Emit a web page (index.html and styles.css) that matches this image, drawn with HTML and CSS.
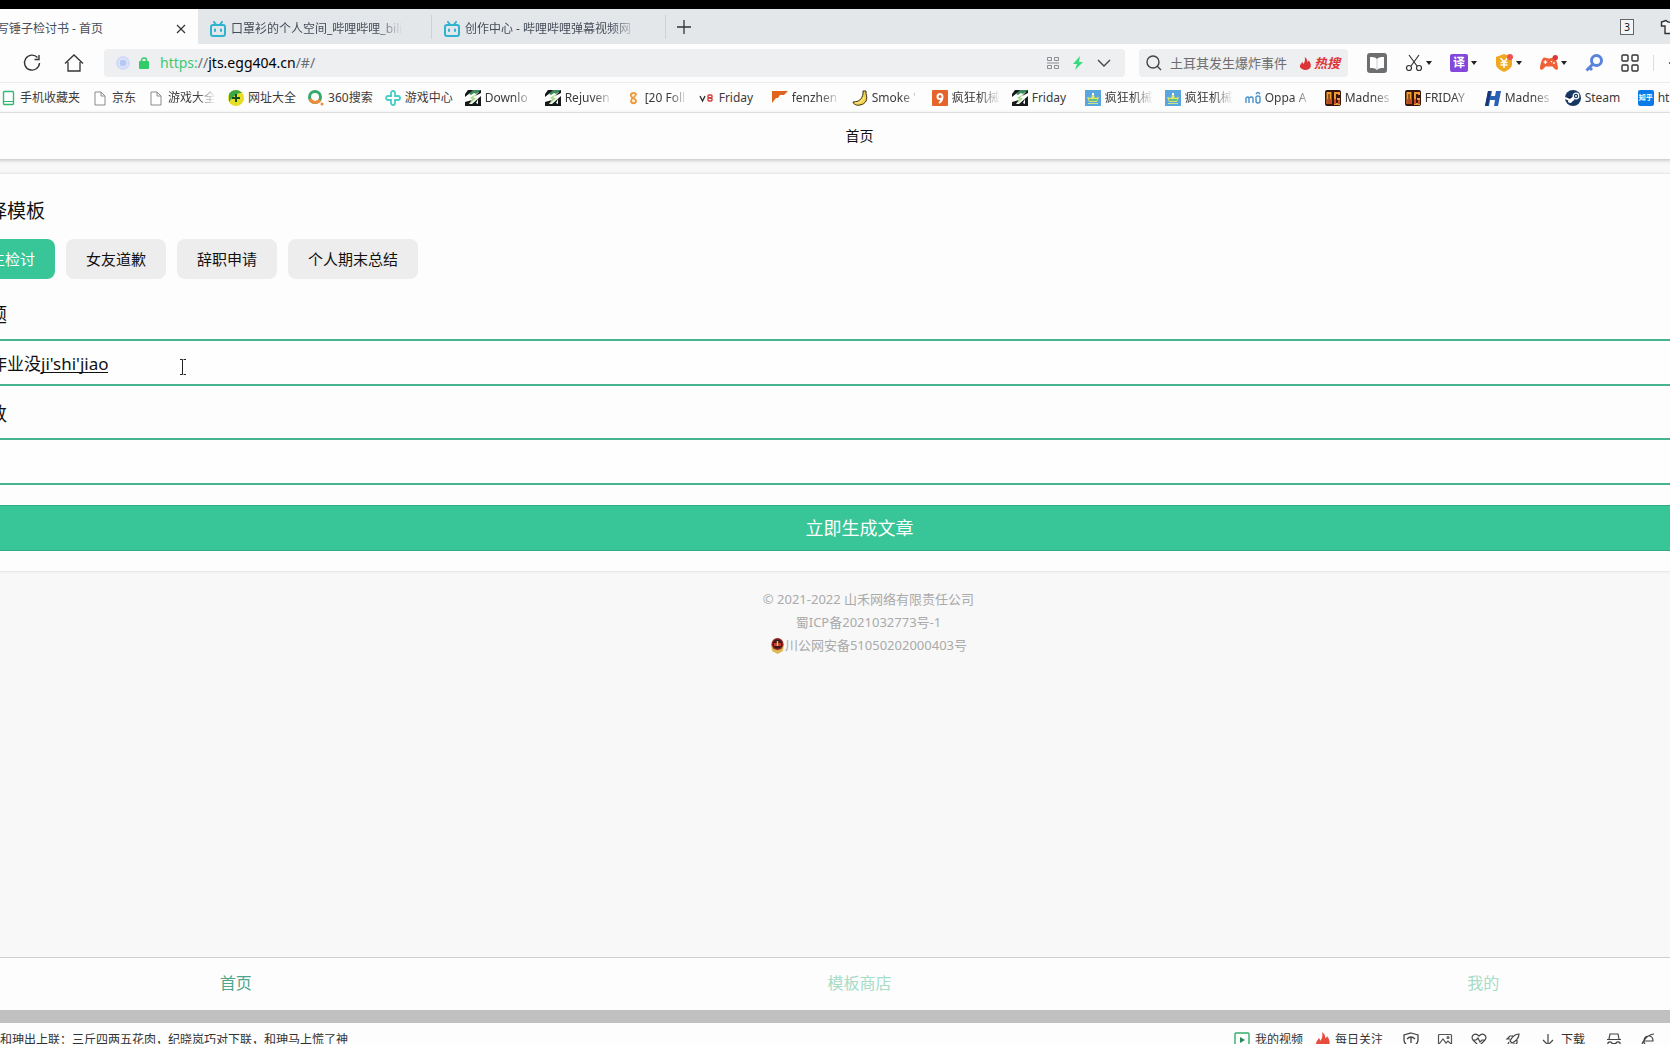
FILE: index.html
```html
<!DOCTYPE html>
<html lang="zh-CN">
<head>
<meta charset="utf-8">
<title>写锤子检讨书 - 首页</title>
<link rel="stylesheet" href="styles.css">
</head>
<body>
<svg class="defs" aria-hidden="true">
  <symbol id="bili" viewBox="1 1 16 16"><g fill="none" stroke="#2fb3d0" stroke-width="2" stroke-linecap="round"><rect x="2" y="5" width="14" height="11" rx="2"/><path d="M5 2l2 2.500M13 2l-2 2.500M6 9.500v1.500M12 9.500v1.500"/></g></symbol>
  <symbol id="page" viewBox="0 0 16 16"><path d="M3 2h6l4 4v9H3zM9 2v4h4" fill="#fff" stroke="#8b8b8b"/></symbol>
  <symbol id="down" viewBox="0 0 6 4"><path d="M0 0h6L3 4z" fill="#222"/></symbol>
  <symbol id="gb" viewBox="0 0 16 16"><path fill="#161a1a" d="M0 0h16v16H0z"/><path fill="#fff" d="M0 0h3L0 4zM0 7l5-4 9-1-4 4 6-3v3L7 14H4l3-4-7 2z"/><path fill="#3e8a5b" d="M4 4l4-4h8l-5 4-2-1-3 2z"/><path fill="#a8dc87" d="M5 8l6-4-3 4h3l-6 6 2-5z"/><path fill="#fff" d="M11 13l2-4v5z"/></symbol>
  <symbol id="crown" viewBox="0 0 16 16"><path fill="#5aa5de" d="M0 0h16v16H0z"/><path fill="#d9e86a" d="M2 7l4 1 1-3h2l1 3 4-1-2 5H4z"/><path fill="#6bbb83" d="M4 9h8v2H4z"/><path fill="#fff" d="M7 3h2v2H7z"/><path fill="#c7e78c" d="M3 13h10v1H3z"/></symbol>
  <symbol id="ng" viewBox="0 0 16 16"><rect width="16" height="16" rx="2" fill="#36150c"/><path d="M2.500 14V3h3v11M14 5V3H10v11h4V9h-2" fill="none" stroke="#ed9b2c" stroke-width="2"/><path d="M2.500 14v-5M6 14V9M10 14V9M14 14v-4" stroke="#c94e22" stroke-width="2"/></symbol>
  <symbol id="flame" viewBox="0 0 14 16"><path d="M6 0c4 3 3 5 3 6 1 0 2-1 2-2 3 4 3 7 2 9-1 2-3 3-6 3S1 14 0 12c0-3 2-4 3-6 1 1 1 2 1 3C6 7 7 4 6 0z" fill="currentColor"/></symbol>
</svg>

<header class="chrome">
  <div class="topstrip"></div>
  <nav class="tabs" aria-label="标签页">
    <div class="tab tab-active"><span class="tab-icon"></span><span class="tab-title">写锤子检讨书 - 首页</span>
      <button class="plain" aria-label="关闭"><svg width="10" height="10" viewBox="0 0 10 10"><path d="M1 1l8 8M9 1L1 9" stroke="#333" stroke-width="1.200"/></svg></button></div>
    <div class="tab"><svg class="tab-icon"><use href="#bili"/></svg><span class="tab-title tab-fade">口罩衫的个人空间_哔哩哔哩_bili</span></div>
    <div class="tab"><svg class="tab-icon"><use href="#bili"/></svg><span class="tab-title tab-fade">创作中心 - 哔哩哔哩弹幕视频网</span></div>
    <button class="plain newtab" aria-label="新标签页"><svg width="14" height="14" viewBox="0 0 14 14"><path d="M7 0v14M0 7h14" stroke="#333" stroke-width="1.300"/></svg></button>
    <div class="tabs-right">
      <button class="count">3</button>
      <svg width="20" height="16" viewBox="0 0 20 16"><path d="M6 1.500L1.500 3v4H5v7.500h10V7h3.500V3L14 1.500C12 4 8 4 6 1.500z" fill="#f4f5f6" stroke="#333" stroke-width="1.400"/></svg>
    </div>
  </nav>

  <div class="toolbar">
    <button class="plain" aria-label="刷新"><svg width="20" height="20" viewBox="0 0 20 20"><path d="M15.500 4.500A7.500 7.500 0 1 0 17.500 10M17 2v4.500h-4.500" fill="none" stroke="#333" stroke-width="1.400"/></svg></button>
    <button class="plain" aria-label="主页"><svg width="20" height="20" viewBox="0 0 20 20"><path d="M1 10.500L10 2l9 8.500M4 9v9h12V9" fill="none" stroke="#333" stroke-width="1.300"/></svg></button>
    <div class="address">
      <svg width="14" height="14" viewBox="0 0 14 14"><circle cx="7" cy="7" r="7" fill="#d3dcf6"/><circle cx="7" cy="7" r="4" fill="#b5c7f5" stroke="#e6ebfb"/></svg>
      <svg width="10" height="12" viewBox="0 0 10 12"><path d="M2.500 6V3.500a2.500 2.500 0 0 1 5 0V6" fill="none" stroke="#31cc69" stroke-width="1.500"/><rect y="4" width="10" height="8" rx="1" fill="#31cc69"/></svg>
      <div class="url" role="textbox" aria-label="地址"><span class="scheme">https:</span><span class="dim">//</span>jts.egg404.cn<span class="dim">/#/</span></div>
      <svg width="12" height="12" viewBox="0 0 12 12" fill="none" stroke="#8a8d91"><path d="M.5.5h4v3h-4zM7.500.5h4v3h-4zM.5 8.500h4v3h-4zM7.500 8.500h4v3h-4zM0 6h12"/></svg>
      <svg width="10" height="14" viewBox="0 0 10 14"><path d="M7 0L0 8h4l-2 6 8-8H6z" fill="#35db7c"/></svg>
      <svg width="14" height="8" viewBox="0 0 14 8"><path d="M1 1l6 6 6-6" fill="none" stroke="#444" stroke-width="1.400"/></svg>
    </div>
    <form class="search">
      <svg width="16" height="16" viewBox="0 0 16 16"><path d="M11.500 11.500L15 15M13 7A6 6 0 1 1 1 7a6 6 0 0 1 12 0z" fill="none" stroke="#444" stroke-width="1.400"/></svg>
      <input aria-label="搜索" placeholder="土耳其发生爆炸事件">
      <a href="#hot" class="hot"><svg width="13" height="13"><use href="#flame"/></svg>热搜</a>
    </form>
    <div class="tools">
      <svg class="t20" viewBox="0 0 20 20"><rect width="20" height="20" rx="3" fill="#6d6e70"/><path d="M3 4c3 0 5 0 7 2 2-2 4-2 7-2v11c-3 0-5 0-7 2-2-2-4-2-7-2z" fill="#fff"/><path d="M10 6v10" stroke="#ccc"/></svg>
      <div class="pair"><svg class="t18" viewBox="0 0 18 18"><g fill="none" stroke="#333" stroke-width="1.200"><path d="M4 1l8 11M14 1L6 12"/><circle cx="4" cy="14" r="2.500"/><circle cx="14" cy="14" r="2.500"/></g></svg><svg class="tri"><use href="#down"/></svg></div>
      <div class="pair"><span class="translate">译</span><svg class="tri"><use href="#down"/></svg></div>
      <div class="pair"><svg class="t18" viewBox="0 0 18 18"><path d="M9 0l8 3v7c0 4-4 6-8 8-4-2-8-4-8-8V3z" fill="#f0a81e"/><path d="M5.500 4L9 8l3.500-4M5.500 8.500h7M5.500 11h7M9 8v6" fill="none" stroke="#fff" stroke-width="1.500"/><circle cx="15" cy="3" r="3" fill="#ee5252"/></svg><svg class="tri"><use href="#down"/></svg></div>
      <div class="pair"><svg class="t18" viewBox="0 0 20 18"><path d="M5 3c2 0 2 1 5 1s3-1 5-1c3 0 5 9 5 12-1 3-4 1-6-2H6c-2 3-5 5-6 2 0-3 2-12 5-12z" fill="#ee6035"/><path d="M4 8h4M6 6v4M12 7.500h1.500M14.500 9h2" stroke="#fff" stroke-width="1.500"/><circle cx="17" cy="3" r="3" fill="#d93a3e"/></svg><svg class="tri"><use href="#down"/></svg></div>
      <svg class="t18" viewBox="0 0 18 18"><circle cx="11.500" cy="6.500" r="5" fill="none" stroke="#5a83dc" stroke-width="3"/><path d="M8 10l-6.500 6.500M4 13l3 3" stroke="#5a83dc" stroke-width="3"/></svg>
      <svg class="t18" viewBox="0 0 18 18"><g fill="none" stroke="#333" stroke-width="1.400"><rect x="1" y="1" width="6" height="6" rx="1"/><rect x="11" y="1" width="6" height="6" rx="1"/><rect x="1" y="11" width="6" height="6" rx="1"/><rect x="11" y="11" width="6" height="6" rx="1"/></g></svg>
      <span class="rule"></span>
      <svg class="t18" viewBox="0 0 18 18"><g fill="none" stroke="#333" stroke-width="1.500"><circle cx="9" cy="9" r="4"/><path d="M9 1v2M9 15v2M1 9h2M15 9h2M3 3l2 2M13 13l2 2M15 3l-2 2M5 13l-2 2"/></g></svg>
    </div>
  </div>

  <nav class="bookmarks" aria-label="收藏夹">
    <a href="#b1"><svg viewBox="0 0 16 16"><rect x="3.500" y="1.500" width="10" height="13" rx="1" fill="#fff" stroke="#36b772" stroke-width="1.400"/><path d="M4 11.500h9" stroke="#36b772"/></svg><span>手机收藏夹</span></a>
    <a href="#b2"><svg><use href="#page"/></svg><span>京东</span></a>
    <a href="#b3"><svg><use href="#page"/></svg><span class="cut">游戏大全</span></a>
    <a href="#b4"><svg viewBox="0 0 16 16"><circle cx="8" cy="8" r="8" fill="#e6dd25"/><path d="M1 4A8 8 0 0 1 14 3C8 2 4 8 1 12z" fill="#3aa845"/><path d="M8 4v8M4 8h8" stroke="#174f20" stroke-width="2"/></svg><span>网址大全</span></a>
    <a href="#b5"><svg viewBox="0 0 16 16"><circle cx="7" cy="7" r="5.500" fill="none" stroke="#35a96b" stroke-width="3"/><path d="M2 9c2 4 7 5 10 1" fill="none" stroke="#f08a35" stroke-width="3"/><circle cx="14" cy="14" r="1.500" fill="#f08a35"/></svg><span>360搜索</span></a>
    <a href="#b6"><svg viewBox="0 0 16 16"><path d="M6 6V3a2 2 0 0 1 4 0v3h3a2 2 0 0 1 0 4h-3v3a2 2 0 0 1-4 0v-3H3a2 2 0 0 1 0-4h4" fill="none" stroke="#45cfc5" stroke-width="1.800"/></svg><span>游戏中心</span></a>
    <a href="#b7"><svg><use href="#gb"/></svg><span class="cut">Downlo</span></a>
    <a href="#b8"><svg><use href="#gb"/></svg><span class="cut">Rejuven</span></a>
    <a href="#b9"><svg viewBox="0 0 16 16"><path d="M11 4c-2-2-6-1-5 2s5 2 5 5-5 3-5 0c0-4 5-3 5-7z" fill="#fff1d5" stroke="#f09a3a" stroke-width="1.800"/></svg><span class="cut narrow">[20 Foll</span></a>
    <a href="#b10"><svg viewBox="0 0 16 16" fill="none" stroke-width="1.400"><path d="M1 6l2.500 5L6 6" stroke="#333"/><rect x="9" y="5" width="4" height="3" rx="1" stroke="#d33c38"/><rect x="9" y="8" width="4" height="3" rx="1" stroke="#d33c38"/></svg><span class="short">Friday</span></a>
    <a href="#b11"><svg viewBox="0 0 16 16"><path d="M0 1h16l-4 4H8L6 8H4l-4 5z" fill="#e0631e"/></svg><span class="cut">fenzhen</span></a>
    <a href="#b12"><svg viewBox="0 0 16 16"><path d="M11 1h3v3c2 5 0 10-6 11-3 1-7-1-7-3 6 0 9-3 10-8z" fill="#f4d34c" stroke="#362c15"/><path d="M3 13c5 0 8-2 9-6" fill="none" stroke="#fff0a0"/></svg><span class="cut">Smoke '</span></a>
    <a href="#b13"><svg viewBox="0 0 16 16"><rect width="16" height="16" rx="1" fill="#e5642b"/><path d="M10.500 6.500a2.500 2.500 0 1 0-2.500 2.500c2 0 2.500-1 2.500-2.500 0 3-1 5-3.500 6.500" fill="none" stroke="#fff" stroke-width="2"/></svg><span class="cut">疯狂机械</span></a>
    <a href="#b14"><svg><use href="#gb"/></svg><span class="short">Friday</span></a>
    <a href="#b15"><svg><use href="#crown"/></svg><span class="cut">疯狂机械</span></a>
    <a href="#b16"><svg><use href="#crown"/></svg><span class="cut">疯狂机械</span></a>
    <a href="#b17"><svg viewBox="0 0 16 16"><path d="M1 13V8q2-2 3 0v5M4 8q3-2 4 0v5M11 7v4q0 2 2 2t2-2V7q0-1-2-1t-2 1M11 4q2-3 4 0" fill="none" stroke="#4790cb" stroke-width="1.400"/></svg><span class="cut">Oppa A</span></a>
    <a href="#b18"><svg><use href="#ng"/></svg><span class="cut">Madnes</span></a>
    <a href="#b19"><svg><use href="#ng"/></svg><span class="cut">FRIDAY</span></a>
    <a href="#b20"><svg viewBox="0 0 16 16"><path d="M3 1h4L6 6h4l1-5h5l-3 15H9l1-6H5l-1 6H0z" fill="#2860b5"/><path d="M3 1h3L3 16H0z" fill="#173873"/></svg><span class="cut">Madnes</span></a>
    <a href="#b21"><svg viewBox="0 0 16 16"><circle cx="8" cy="8" r="8" fill="#173762"/><circle cx="11" cy="6" r="2.800" fill="none" stroke="#fff" stroke-width="1.200"/><circle cx="11" cy="6" r="1" fill="#fff"/><path d="M0 8l5 2 4-3M5 12l4-3" stroke="#fff" stroke-width="2"/><circle cx="5" cy="11" r="2" fill="#fff"/></svg><span class="short">Steam</span></a>
    <a href="#b22"><i class="zhihu">知乎</i><span>ht</span></a>
  </nav>
</header>

<main class="site">
  <div class="titlebar">首页</div>
  <form class="card">
    <h2>请选择模板</h2>
    <div class="chips">
      <button type="button" class="chip chip-on">学生检讨</button>
      <button type="button" class="chip">女友道歉</button>
      <button type="button" class="chip">辞职申请</button>
      <button type="button" class="chip">个人期末总结</button>
    </div>
    <label for="topic">主标题</label>
    <div class="field">
      <input id="topic" value="作业没ji'shi'jiao">
      <span class="composing"></span>
      <svg class="ibeam" width="8" height="18" viewBox="0 0 8 18"><path d="M1 1.500h2.500v15H1M7 1.500H4.500M4.500 16.500H7" fill="none" stroke="#222"/></svg>
    </div>
    <label for="words">总字数</label>
    <div class="field"><input id="words"></div>
    <button type="button" class="submit">立即生成文章</button>
  </form>
  <footer class="legal">
    <p>© 2021-2022 山禾网络有限责任公司</p>
    <p>蜀ICP备2021032773号-1</p>
    <p><svg width="15" height="16" viewBox="0 0 15 16"><path d="M1 6h13l-1 7-5.500 3L2 13z" fill="#dfb658"/><circle cx="7.500" cy="6" r="6" fill="#912822"/><circle cx="7.500" cy="6" r="4.500" fill="#3d1818"/><path d="M4 5h7v3H4z" fill="#c63c33"/><path d="M7.500 3v5" stroke="#eebf57" stroke-width="1.500"/></svg>川公网安备51050202000403号</p>
  </footer>
  <nav class="bottomnav">
    <a href="#home" class="on">首页</a><a href="#shop">模板商店</a><a href="#me">我的</a>
  </nav>
</main>
<div class="scrollbar"></div>
<footer class="status">
  <a href="#news" class="news">和珅出上联：三斤四两五花肉，纪晓岚巧对下联，和珅马上慌了神</a>
  <a href="#video" class="item"><svg class="t16" viewBox="0 0 16 16"><rect x="1" y="1" width="14" height="14" rx="1" fill="none" stroke="#32ad6c" stroke-width="1.400"/><path d="M6 5l5 3-5 3z" fill="#258c55"/></svg>我的视频</a>
  <a href="#daily" class="item daily"><svg width="14" height="16" class="red"><use href="#flame"/></svg>每日关注</a>
  <div class="status-icons">
    <svg class="t16" viewBox="0 0 16 16"><path d="M8 1l7 2v5c0 4-4 6-7 7-3-1-7-3-7-7V3zM4 7q4-4 8 0M8 5v6" fill="none" stroke="#444" stroke-width="1.300"/></svg>
    <svg class="t16" viewBox="0 0 16 16"><g fill="none" stroke="#555" stroke-width="1.200"><rect x="1.500" y="2.500" width="13" height="11" rx="1"/><path d="M2 12l4-5 3 4 2-2 3 3"/><circle cx="11" cy="5.500" r="1"/></g></svg>
    <svg class="t16" viewBox="0 0 16 16"><path d="M8 14L2 8C-1 4 4 0 8 4c4-4 9 0 6 4zM2 8h3l2-2 2 4 2-2h3" fill="none" stroke="#444" stroke-width="1.200"/></svg>
    <svg class="t16" viewBox="0 0 16 16"><path d="M14 2C9 2 7 5 5 9l2 2c4-2 7-4 7-9zM5 7H2l3-3h3M9 11v3l3-3V8M4 10l-2 4 4-2" fill="none" stroke="#444" stroke-width="1.200"/></svg>
    <a href="#download" class="item download"><svg width="12" height="14" viewBox="0 0 12 14"><path d="M6 1v11M1 7l5 5 5-5" fill="none" stroke="#444" stroke-width="1.200"/></svg>下载</a>
    <svg class="t16" viewBox="0 0 16 16"><g fill="none" stroke="#444" stroke-width="1.200"><path d="M3 7l1-5h8l1 5M1 7.500h14M6 11.500h4"/><circle cx="4" cy="12" r="2.200"/><circle cx="12" cy="12" r="2.200"/></g></svg>
    <svg class="t16" viewBox="0 0 16 16"><path d="M4 9h9c0-7-8-6-9-1-1 6 6 7 8 4M3 14C-1 15 6 2 14 2" fill="none" stroke="#444" stroke-width="1.200"/></svg>
  </div>
</footer>
</body>
</html>
```
FILE: styles.css
```css
* { box-sizing: border-box; }

body {
  margin: 0;
  height: 100vh;
  overflow: hidden;
  display: flex;
  flex-direction: column;
  background: #fdfdfd;
  color: #111;
  font: 12px/16px "Noto Sans", "Noto Sans CJK SC", sans-serif;
}

button, input { font: inherit; color: inherit; border: 0; outline: 0; }
a { color: inherit; text-decoration: none; }
svg { flex: none; display: block; }
.defs { position: absolute; width: 0; height: 0; }
.plain { background: none; padding: 0; display: flex; }

/* browser frame */
.chrome { flex: none; }
.topstrip { height: 9px; background: #000; }

.tabs {
  display: flex;
  height: 35px;
  background: #e4e7ea;
  margin-left: -36px;
}
.tab {
  display: flex;
  align-items: center;
  width: 234px;
  padding: 4px 12px 0;
  gap: 5px;
  color: #454d59;
  position: relative;
}
.tab:not(.tab-active)::after {
  content: "";
  position: absolute;
  right: 0;
  top: 6px;
  height: 24px;
  border-right: 1px solid #ced1d5;
}
.tab-active { background: #fdfdfd; }
.tab-icon { width: 16px; height: 16px; flex: none; }
.tab-title { flex: 1; overflow: hidden; white-space: nowrap; }
.tab-fade {
  flex: none;
  width: 172px;
  -webkit-mask-image: linear-gradient(90deg, #000 85%, transparent);
  mask-image: linear-gradient(90deg, #000 85%, transparent);
}
.newtab { padding: 11px; }
.tabs-right {
  margin-left: auto;
  margin-right: -10px;
  display: flex;
  align-items: center;
  gap: 26px;
}
.count {
  width: 14px;
  height: 16px;
  padding: 0;
  font-size: 10px;
  line-height: 14px;
  background: #f4f5f6;
  border: 1px solid #666;
}

.toolbar {
  display: flex;
  align-items: center;
  height: 39px;
  padding-left: 22px;
  gap: 22px;
  border-bottom: 1px solid #ececec;
}
.address {
  flex: 1;
  display: flex;
  align-items: center;
  height: 28px;
  margin-left: -2px;
  padding: 0 14px 0 12px;
  gap: 11px;
  background: #eeeff1;
  border-radius: 4px;
}
.address svg:first-child { margin-right: -2px; }
.address svg:nth-of-type(n+3) { margin-left: 3px; }
.url { flex: 1; font-size: 14px; line-height: 20px; color: #000; }
.scheme { color: #42c873; }
.dim { color: #6a6d70; }
.search {
  display: flex;
  align-items: center;
  width: 209px;
  height: 28px;
  margin-left: -8px;
  padding: 0 8px 0 7px;
  gap: 8px;
  background: #eeeff1;
  border-radius: 4px;
}
.search input { flex: 1; min-width: 0; padding: 0; background: none; font-size: 13px; }
.search input::placeholder { color: #6d6d6d; opacity: 1; }
.hot { display: flex; align-items: center; gap: 2px; color: #dd3438; font-size: 13px; font-style: italic; font-weight: bold; }

.tools { display: flex; align-items: center; width: 303px; margin-left: -3px; gap: 18px; }
.pair { display: flex; flex: none; align-items: center; width: 27px; justify-content: space-between; }
.t20 { width: 20px; height: 20px; }
.t18 { width: 18px; height: 18px; }
.t16 { width: 16px; height: 16px; }
.tri { width: 6px; height: 4px; }
.translate {
  width: 18px;
  height: 18px;
  border-radius: 2px;
  background: #8347dc;
  color: #fff;
  font-weight: bold;
  line-height: 17px;
  text-align: center;
}
.rule { height: 16px; margin: 0 -4px; border-left: 1px solid #ddd; }

.bookmarks {
  display: flex;
  align-items: center;
  height: 30px;
  gap: 12px;
  overflow: hidden;
  border-bottom: 1px solid #ececec;
  color: #3b3b3b;
}
.bookmarks a { display: flex; flex: none; align-items: center; gap: 4px; white-space: nowrap; }
.bookmarks svg { width: 16px; height: 16px; }
.cut {
  width: 48px;
  overflow: hidden;
  -webkit-mask-image: linear-gradient(90deg, #000 60%, transparent);
  mask-image: linear-gradient(90deg, #000 60%, transparent);
}
.narrow { width: 42px; }
.short { width: 41px; }
.zhihu {
  width: 16px;
  height: 16px;
  border-radius: 2px;
  background: #0b7be8;
  color: #fff;
  font-size: 7px;
  font-style: normal;
  font-weight: bold;
  text-align: center;
}

/* web page, wider than the visible area on both sides */
.site {
  flex: 1;
  display: flex;
  flex-direction: column;
  min-height: 0;
  margin: 0 -125px 0 -76px;
  background: #f8f8f8;
}
.titlebar {
  height: 46px;
  line-height: 46px;
  text-align: center;
  font-size: 14px;
  background: #fdfdfd;
  box-shadow: 0 1px 4px rgba(0, 0, 0, .25);
}
.card {
  display: flex;
  flex-direction: column;
  margin-top: 15px;
  padding: 22px 26px 20px;
  background: #fdfdfd;
  box-shadow: 0 0 3px rgba(0, 0, 0, .15);
}
.card h2, .card label {
  margin: 0;
  font-size: 19px;
  line-height: 30px;
  font-weight: 400;
}
.chips { display: flex; gap: 11px; padding: 13px 5px 21px; }
.chip {
  height: 40px;
  padding: 0 20px;
  border-radius: 8px;
  background: #ededed;
  font-size: 15px;
}
.chip-on { background: #38c598; color: #fff; }
.field { position: relative; margin: 9px 0 13px; }
.field input {
  display: block;
  width: 100%;
  height: 47px;
  padding: 0 38px;
  border: 2px solid #48b391;
  background: #fefefe;
  font-size: 17px;
}
.composing {
  position: absolute;
  left: 91px;
  top: 33px;
  width: 67px;
  border-top: 1px solid #111;
}
.ibeam { position: absolute; left: 229px; top: 19px; }
.submit {
  height: 46px;
  margin-top: 7px;
  background: #38c598;
  border: solid #2faa84;
  border-width: 1px 0;
  color: #fff;
  font-size: 18px;
}
.legal {
  padding: 17px 0 0 18px;
  font-size: 13px;
  line-height: 23px;
  text-align: center;
  color: #aaa;
}
.legal p { margin: 0; display: flex; justify-content: center; align-items: center; }
.bottomnav {
  display: flex;
  height: 53px;
  margin-top: auto;
  background: #fdfdfd;
  border-top: 1px solid #d0d0d0;
  font-size: 16px;
  line-height: 50px;
  text-align: center;
  color: #a6dcc8;
}
.bottomnav a { flex: 1; }
.bottomnav .on { color: #4fa58b; }

.scrollbar { flex: none; height: 13px; background: #c0c0c0; }
.status {
  flex: none;
  display: flex;
  align-items: center;
  height: 33px;
  margin-bottom: -12px;
  color: #333;
}
.news { margin-right: auto; }
.item { display: flex; align-items: center; gap: 5px; }
.daily { margin-left: 13px; }
.download { gap: 7px; margin: 0 3px; }
.red { color: #e84c3d; }
.status-icons { display: flex; align-items: center; width: 287px; padding-left: 20px; gap: 18px; }
```
